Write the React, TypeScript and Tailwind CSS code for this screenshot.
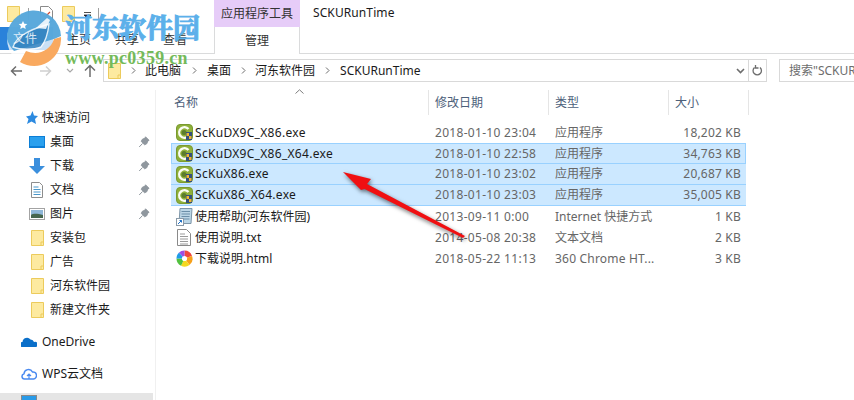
const font = { fontFamily: '"Noto Sans","Noto Sans CJK SC",sans-serif' };

function Folder({ className = "" }: { className?: string }) {
  return (
    <svg width="13" height="16" viewBox="0 0 13 16" className={className}>
      <path d="M.5.5h12v15H.5z" fill="#fdeaa0" stroke="#eccb5c" />
      <path d="M10 15.500v-3.500h2.500" fill="none" stroke="#eccb5c" />
    </svg>
  );
}

function Pin() {
  return (
    <svg width="12" height="12" viewBox="0 0 12 12">
      <path d="M7.500.8 11 4.300 9.800 5 8.700 7.800 6.500 8.700 3.300 5.500 4.300 3.300 7 2.200z M4.500 7.500 1.200 11" fill="#8f979e" stroke="#8f979e" strokeWidth="1" />
    </svg>
  );
}

function Exe() {
  return (
    <svg width="17" height="17" viewBox="0 0 17 17">
      <rect x=".5" y=".5" width="16" height="16" rx="3.500" fill="#8fb03a" stroke="#7a9a30" />
      <path d="M12.500 5A5.300 5.300 0 1 0 12 12.500" fill="none" stroke="#fbfdf4" strokeWidth="2.400" />
      <circle cx="8" cy="8.500" r="2.500" fill="#5c7d2c" />
      <path d="M10 8h6v8h-6z" fill="#34507c" />
      <path d="M10.500 9h2.500v3h-2.500zM13 12h2.500v3H13z" fill="#f2b632" />
    </svg>
  );
}

function Shortcut() {
  return (
    <svg width="17" height="18" viewBox="0 0 17 18">
      <path d="M4 .5h12l-1 15H3z" fill="#bcd6e6" stroke="#7d95a8" />
      <path d="M5.500 3.500h8.500M5.500 6h8.500M5.500 8.500h8M5.500 11h8" stroke="#6b8fa8" />
      <rect x=".5" y="10.500" width="7" height="7" fill="#fff" stroke="#8a9aa8" />
      <path d="M2 16l3.500-3.500M3.500 12.500h2v2" stroke="#1e6fc4" fill="none" />
    </svg>
  );
}

function Txt() {
  return (
    <svg width="14" height="17" viewBox="0 0 14 17">
      <path d="M.5.500h9l4 4v12H.5z" fill="#fff" stroke="#8a8a8a" />
      <path d="M3 5h5M3 7.500h8M3 10h8M3 12.500h8M3 15h8" stroke="#9a9a9a" />
    </svg>
  );
}

function Chrome360() {
  return (
    <svg width="17" height="17" viewBox="0 0 17 17">
      <path d="M8.500 8.500 8.500.5A8 8 0 0 1 16 6z" fill="#f0483e" />
      <path d="M8.500 8.500 16 6A8 8 0 0 1 13.500 15z" fill="#f7a11a" />
      <path d="M8.500 8.500 13.500 15A8 8 0 0 1 5 15.700z" fill="#f4d81f" />
      <path d="M8.500 8.500 5 15.700A8 8 0 0 1 .5 8.500z" fill="#52c13f" />
      <path d="M8.500 8.500 .5 8.500A8 8 0 0 1 3 2.500z" fill="#1f9be8" />
      <path d="M8.500 8.500 3 2.500A8 8 0 0 1 8.500.5z" fill="#a04de0" />
      <circle cx="8.500" cy="8.500" r="2.600" fill="#fff" />
    </svg>
  );
}

const files = [
  { n: "ScKuDX9C_X86.exe", d: "2018-01-10 23:04", t: "应用程序", s: "18,202 KB", i: <Exe />, sel: 0, nt: "tracking-[0.3px]", tt: "" },
  { n: "ScKuDX9C_X86_X64.exe", d: "2018-01-10 22:58", t: "应用程序", s: "34,763 KB", i: <Exe />, sel: 2, nt: "tracking-[0.3px]", tt: "" },
  { n: "ScKuX86.exe", d: "2018-01-10 23:02", t: "应用程序", s: "20,687 KB", i: <Exe />, sel: 1, nt: "tracking-[0.3px]", tt: "" },
  { n: "ScKuX86_X64.exe", d: "2018-01-10 23:03", t: "应用程序", s: "35,005 KB", i: <Exe />, sel: 1, nt: "tracking-[0.3px]", tt: "" },
  { n: "使用帮助(河东软件园)", d: "2013-09-11 0:00", t: "Internet 快捷方式", s: "1 KB", i: <Shortcut />, sel: 0, nt: "", tt: "" },
  { n: "使用说明.txt", d: "2014-05-08 20:38", t: "文本文档", s: "2 KB", i: <Txt />, sel: 0, nt: "", tt: "" },
  { n: "下载说明.html", d: "2018-05-22 11:13", t: "360 Chrome HT...", s: "3 KB", i: <Chrome360 />, sel: 0, nt: "", tt: "tracking-[0.2px]" },
];

function SideIcon({ k }: { k: string }) {
  if (k === "桌面")
    return (
      <svg width="16" height="12" viewBox="0 0 16 12">
        <rect width="16" height="12" fill="#0c7ed6" />
        <rect x="1" y="1" width="14" height="9" fill="#2aa0ee" />
      </svg>
    );
  if (k === "下载")
    return (
      <svg width="16" height="16" viewBox="0 0 16 16">
        <path d="M5 0h6v8h5l-8 8-8-8h5z" fill="#3b8fdd" />
      </svg>
    );
  if (k === "文档")
    return (
      <svg width="12" height="16" viewBox="0 0 12 16">
        <path d="M.5.5h8l3 3v12H.5z" fill="#fff" stroke="#8d8d8d" />
        <path d="M2.500 5h5M2.500 7.500h7M2.500 10h7M2.500 12.500h7" stroke="#4a97c9" />
      </svg>
    );
  if (k === "图片")
    return (
      <svg width="16" height="12" viewBox="0 0 16 12">
        <rect x=".5" y=".5" width="15" height="11" fill="#fff" stroke="#a3a3a3" />
        <rect x="2" y="2" width="12" height="8" fill="#8fb7d8" />
        <path d="M2 7c3-2 7-1 12 0v3H2z" fill="#46664e" />
      </svg>
    );
  return <Folder />;
}

const quick: [string, boolean][] = [
  ["桌面", true],
  ["下载", true],
  ["文档", true],
  ["图片", true],
  ["安装包", false],
  ["广告", false],
  ["河东软件园", false],
  ["新建文件夹", false],
];

function Chev({ className }: { className: string }) {
  return (
    <svg width="5" height="7" viewBox="0 0 5 7" className={className}>
      <path d="M1 .5l3 3-3 3" fill="none" stroke="#6d6d6d" />
    </svg>
  );
}

export default function App() {
  return (
    <div className="relative w-[854px] h-[400px] overflow-hidden bg-white text-[12px] text-[#1a1a1a]" style={font}>
      {/* title row */}
      <div className="flex h-[27px] items-center">
        <div className="flex items-center w-[214px] pl-[7px]">
          <Folder />
          <div className="w-px h-[12px] bg-[#a0a0a0] ml-[8px]" />
          <svg width="13" height="16" viewBox="0 0 13 16" className="ml-[11px]">
            <path d="M.5.5h8l4 4v11H.5z" fill="#fff" stroke="#8a8a8a" />
            <path d="M3 9l2 2 5-5" fill="none" stroke="#d2452c" strokeWidth="1.200" />
          </svg>
          <Folder className="ml-[9px]" />
          <svg width="9" height="7" viewBox="0 0 9 7" className="ml-[8px] mt-[3px]">
            <path d="M1 .5h7M1 3h7L4.500 6.500z" stroke="#222" fill="#222" strokeWidth=".8" />
          </svg>
          <div className="w-px h-[12px] bg-[#a0a0a0] ml-[6px]" />
        </div>
        <div className="w-[86px] h-[27px] bg-[#e6ccf8] flex items-center justify-center text-[#333]">应用程序工具</div>
        <div className="ml-[13px] tracking-[0.1px] -mt-[2px]">SCKURunTime</div>
      </div>

      {/* ribbon tabs */}
      <div className="flex h-[27px] border-b border-[#dadbdc]">
        <div className="w-[53px] h-[23px] bg-[#2a82da]" />
        <div className="w-[161px] flex items-center pl-[14px] gap-[24px] text-[#333]">
          <span>主页</span>
          <span>共享</span>
          <span>查看</span>
        </div>
        <div className="w-[86px] h-[27px] bg-white border-x border-[#dadbdc] flex items-center justify-center text-[#333]">管理</div>
      </div>

      {/* address row */}
      <div className="flex items-center h-[23px] mt-[5px]">
        <div className="w-[103px] flex items-center pl-[10px] text-[#6d6d6d]">
          <svg width="12" height="12" viewBox="0 0 12 12">
            <path d="M12 6H1.500M6 1.500 1.500 6 6 10.500" fill="none" stroke="#6d6d6d" strokeWidth="1.500" />
          </svg>
          <svg width="12" height="12" viewBox="0 0 12 12" className="ml-[18px]">
            <path d="M0 6h10.500M6 1.500 10.500 6 6 10.500" fill="none" stroke="#cfcfcf" strokeWidth="1.500" />
          </svg>
          <svg width="8" height="6" viewBox="0 0 8 6" className="ml-[14px]">
            <path d="M1 1l3 3 3-3" fill="none" stroke="#a8a8a8" strokeWidth="1.200" />
          </svg>
          <svg width="12" height="13" viewBox="0 0 12 13" className="ml-[10px]">
            <path d="M6 13V2M1 6.500 6 1.500l5 5" fill="none" stroke="#6d6d6d" strokeWidth="1.500" />
          </svg>
        </div>
        <div className="flex-1 h-[23px] border border-[#d9d9d9] flex items-center pl-[4px] leading-[19px]">
          <Folder />
          <Chev className="ml-[10px]" />
          <span className="ml-[9px]">此电脑</span>
          <Chev className="ml-[11px]" />
          <span className="ml-[10px]">桌面</span>
          <Chev className="ml-[10px]" />
          <span className="ml-[9px]">河东软件园</span>
          <Chev className="ml-[10px]" />
          <span className="ml-[10px]">SCKURunTime</span>
          <svg width="9" height="6" viewBox="0 0 9 6" className="ml-auto mr-[3px]"><path d="M1 1l3.500 3.500L8 1" fill="none" stroke="#6d6d6d" strokeWidth="1.600" /></svg>
          <div className="w-[18px] h-[21px] border-l border-[#d9d9d9] flex items-center justify-center">
            <svg width="11" height="13" viewBox="0 0 11 13"><path d="M2.500 3.500a4.200 4.200 0 1 0 5.500 0M3.500 1v3h3" fill="none" stroke="#6d6d6d" strokeWidth="1.300" /></svg>
          </div>
        </div>
        <div className="w-[75px] ml-[12px] h-[23px] border-y border-l border-[#d9d9d9] flex items-center pl-[9px] text-[#6d6d6d] whitespace-nowrap overflow-hidden">搜索"SCKUR</div>
      </div>

      {/* body */}
      <div className="flex mt-[8px]">
        <aside className="w-[156px] h-[310px] border-r border-[#f0f0f0] shrink-0">
          <div className="h-[16px]" />
          <div className="flex items-center h-[24px] pl-[24px] gap-[4px]">
            <svg width="14" height="14" viewBox="0 0 14 14">
              <path d="M8.500 0 10 4.500 14 5l-3 3 1 5-4.500-2.500L3 13l1.500-5L2 5.500 6.500 4.500z" fill="#2c8ae0" />
            </svg>
            <span>快速访问</span>
          </div>
          {quick.map(([name, pinned]) => (
            <div key={name} className="flex items-center h-[24px] pl-[29px]">
              <div className="w-[16px] flex justify-center">
                <SideIcon k={name} />
              </div>
              <span className="ml-[5px]">{name}</span>
              {pinned && (
                <span className="ml-auto mr-[5px] flex">
                  <Pin />
                </span>
              )}
            </div>
          ))}
          <div className="flex items-center h-[24px] mt-[8px] pl-[21px] gap-[5px]">
            <svg width="16" height="10" viewBox="0 0 16 10">
              <path d="M1 10a2.500 2.500 0 0 1 .5-5A4.500 4.500 0 0 1 9.500 2.500 3.500 3.500 0 0 1 13 5a2.500 2.500 0 0 1 2 5z" fill="#0a6fc9" />
            </svg>
            <span>OneDrive</span>
          </div>
          <div className="flex items-center h-[24px] mt-[8px] pl-[21px] gap-[5px]">
            <svg width="16" height="12" viewBox="0 0 16 12">
              <path d="M3.500 11a2.700 2.700 0 0 1-.5-5.300A4.500 4.500 0 0 1 11.500 4a3.500 3.500 0 0 1 1 7z" fill="none" stroke="#4a8af0" strokeWidth="1.500" />
              <path d="M8 11V6.500M6 8l2-2 2 2" fill="none" stroke="#4a8af0" strokeWidth="1.200" />
            </svg>
            <span>WPS云文档</span>
          </div>
          <div className="h-[10px] mt-[7px] w-[153px] bg-[#e5e5e5] pl-[21px] flex items-start">
            <div className="w-[16px] h-[8px] mt-[2px] bg-[#2a9be8] border border-[#8a8a8a]" />
          </div>
        </aside>

        <main className="flex-1 min-w-0 pl-[4px]">
          <div className="flex h-[25px] text-[#4c607a]">
            <div className="w-[269px] pl-[14px] flex items-center border-r border-[#e5e5e5]">名称</div>
            <div className="w-[120px] pl-[6px] flex items-center border-r border-[#e5e5e5]">修改日期</div>
            <div className="w-[120px] pl-[6px] flex items-center border-r border-[#e5e5e5]">类型</div>
            <div className="w-[80px] pl-[6px] flex items-center border-r border-[#e5e5e5]">大小</div>
          </div>
          <div className="pt-[7px] pl-[11px]">
            {files.map((f) => (
              <div
                key={f.n}
                className={`flex items-center h-[21px] w-[575px] ${f.sel === 2 ? "bg-[#cce8ff] border border-[#99d1ff]" : f.sel === 1 ? "bg-[#cce8ff] border-b border-[#99d1ff]" : ""}`}
              >
                <div className={`flex justify-center shrink-0 ${f.sel === 2 ? "w-[23px] pl-[1px]" : "w-[24px] pl-[2px]"}`}>{f.i}</div>
                <div className={`w-[240px] whitespace-nowrap ${f.nt}`}>{f.n}</div>
                <div className="w-[120px] text-[#666] tracking-[0.3px]">{f.d}</div>
                <div className={`w-[108px] text-[#666] whitespace-nowrap ${f.tt}`}>{f.t}</div>
                <div className="w-[78px] text-right text-[#666] tracking-[0.2px]">{f.s}</div>
              </div>
            ))}
          </div>
        </main>
      </div>

      {/* sort caret */}
      <svg width="9" height="5" viewBox="0 0 9 5" className="absolute left-[295px] top-[89px]">
        <path d="M.5 4.500 4.500 .8l4 3.700" fill="none" stroke="#7d7d7d" />
      </svg>

      {/* watermark logo */}
      <svg width="60" height="60" viewBox="0 0 60 60" className="absolute left-[4px] top-[9px]">
        <circle cx="30" cy="30" r="27" fill="#fff" opacity=".75" />
        <path d="M57 28A27 27 0 0 1 16 53L22 42C34 47 46 42 50 30z" fill="#f9a95f" />
        <path d="M3 30a27 27 0 0 1 54-3l-7 3L10 42A27 27 0 0 1 3 30z" fill="#4ea3d9" opacity=".92" />
        <path d="M9 38c3-9 12-16 36-23-1 9-3 17-8 23-7 3-21 3-28 0z" fill="#2e7fbd" stroke="#fff" strokeWidth="1.400" opacity=".8" />
        <path d="M19 12l1.300 2.700 3 .4-2.200 2 .6 3-2.700-1.500-2.700 1.500.6-3-2.200-2 3-.4z" fill="#fff" />
        <path d="M32 19 43 9l3 2-4 9z" fill="#fff" opacity=".85" />
      </svg>
      <div className="absolute z-10 left-[13px] top-[30px] leading-[18px] text-white/80 whitespace-nowrap">文件</div>
      <div className="absolute left-[65px] top-[9px] text-[27px] leading-[36px] font-bold text-[#5cb0ea] whitespace-nowrap [-webkit-text-stroke:1px_#5cb0ea]" style={{ fontFamily: '"Noto Serif CJK SC","Noto Sans CJK SC",serif' }}>河东软件园</div>
      <div className="absolute left-[65px] top-[46px] text-[18px] leading-[24px] font-bold text-[#74ba5a] whitespace-nowrap tracking-[0.3px]" style={{ fontFamily: '"Liberation Serif",serif' }}>www.pc0359.cn</div>

      {/* red arrow */}
      <svg width="140" height="85" viewBox="0 0 140 85" className="absolute left-[335px] top-[165px] drop-shadow-[1px_2px_2px_rgba(0,0,0,0.55)]">
        <path d="M8 7 36 14 32 19 130 71 128 73 29.500 24 26 25z" fill="#f01012" />
      </svg>
    </div>
  );
}
